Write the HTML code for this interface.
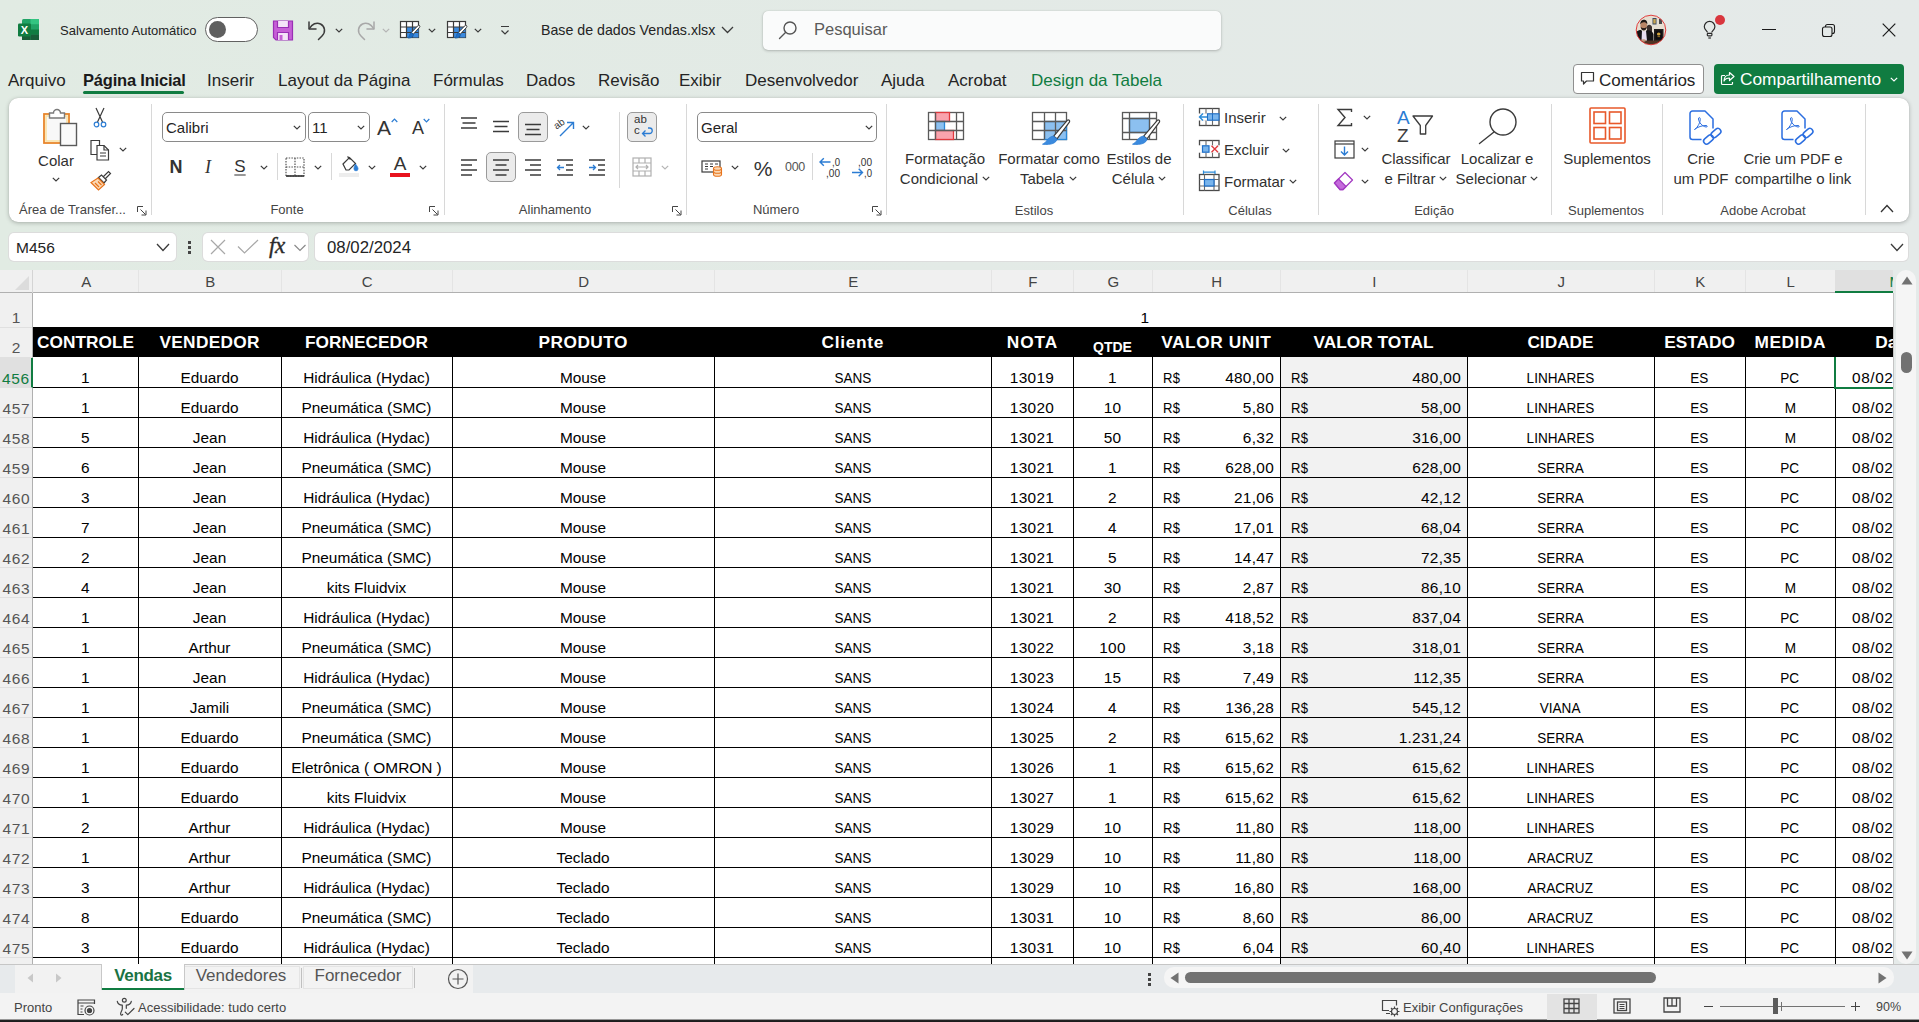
<!DOCTYPE html>
<html lang="pt-BR">
<head>
<meta charset="utf-8">
<title>Base de dados Vendas.xlsx - Excel</title>
<style>
*{box-sizing:border-box;margin:0;padding:0}
html,body{width:1919px;height:1022px;overflow:hidden}
body{position:relative;font-family:"Liberation Sans",sans-serif;color:#242424;background:linear-gradient(90deg,#e1ebe3 0%,#e3eae6 50%,#e5eae9 100%)}
.abs{position:absolute}
/* grid */
#grid{position:absolute;left:0;top:270px;width:1893px;height:694px;background:#fff;overflow:hidden}
.colhead{position:absolute;left:0;top:0;width:1893px;height:23px;background:#f0f0f0;box-shadow:inset 0 -1px 0 #b0b0b0;overflow:hidden}
.corner{position:absolute;left:0;top:0;width:33px;height:23px;border-right:1px solid #d4d4d4}
.corner:after{content:"";position:absolute;left:15px;top:6px;border-left:14px solid transparent;border-bottom:14px solid #dcdcdc}
.colhead .ch{position:absolute;top:0;height:22px;line-height:23px;text-align:center;font-size:15px;color:#444;margin-left:33px;border-right:1px solid #e4e4e4;padding-left:1.5px}
.colhead .ch.sel{background:#e0e0e0;border-bottom:2px solid #107c41;color:#107c41;height:23px;border-right:0}
.rowhead{position:absolute;left:0;top:23px;width:33px;height:671px;background:#f0f0f0;border-right:1px solid #b0b0b0}
.rh{position:absolute;left:0;width:32px;text-align:center;font-size:15.5px;line-height:41px;letter-spacing:.6px;text-indent:.6px;color:#555;border-bottom:1px solid #e0e0e0}
.rh.sel{background:#e0e0e0;color:#107c41;border-right:2px solid #107c41;width:33px}
.cells{position:absolute;left:33px;top:23px;width:1860px;height:671px;background:#fff;overflow:hidden;font-family:"Liberation Sans",sans-serif}
.gray{position:absolute;left:1247px;top:64px;width:187px;height:620px;background:#f2f2f2}
.one{position:absolute;left:1040px;top:0;width:79px;height:34px;line-height:50px;text-align:right;padding-right:3px;font-size:15.4px;color:#000}
.black{position:absolute;left:0;top:34px;width:1860px;height:30px;background:#000}
.hd{position:absolute;top:0;height:30px;line-height:31px;text-align:center;color:#fff;font-weight:bold;font-size:17.3px;white-space:nowrap}
.hd.small{font-size:14px;line-height:41px}
.vl{position:absolute;top:64px;width:1px;height:620px;background:#000}
.row{position:absolute;left:0;width:1860px;height:30px;border-bottom:1px solid #000}
.c{position:absolute;top:0;height:30px;line-height:39.5px;text-align:center;font-size:15.4px;color:#000;white-space:nowrap}
.c.money{display:flex;justify-content:space-between;padding:0 6px 0 11px}
.c.date{text-align:left;padding-left:17px;font-size:15.4px;letter-spacing:.6px}
.c.num{font-size:15.4px;letter-spacing:.3px}
.up{display:inline-block;transform:scaleX(.88)}
.rs{display:inline-block;transform:scaleX(.85);transform-origin:0 50%}
.selbox{position:absolute;left:1801px;top:64px;width:70px;height:32px;border:2px solid #107c41;border-right:0;border-top:0}

.t{position:absolute;white-space:nowrap;transform:translateY(-50%);line-height:1}
.tc{position:absolute;white-space:nowrap;transform:translate(-50%,-50%);line-height:1;text-align:center}
.ic{position:absolute;overflow:visible}
.chev{position:absolute;width:8px;height:5px}
.tab{font-size:17px;color:#242424}
.lbl{font-size:15px;color:#303030;margin-top:-1px}
.grp{font-size:13px;color:#444;margin-top:-1px}
.sep{position:absolute;top:104px;width:1px;height:111px;background:#d8d8d8}
.sep2{position:absolute;width:1px;height:27px;background:#d8d8d8}
.selbtn{position:absolute;background:#ebebeb;border:1px solid #9a9a9a;border-radius:5px}
.combo{position:absolute;height:30px;background:#fff;border:1px solid #8a8a8a;border-radius:5px;font-size:15px;line-height:29px;padding-left:3px;color:#242424}
</style>
</head>
<body>

<!-- title bar -->
<svg class="ic" style="left:17px;top:18px" width="23" height="23" viewBox="0 0 23 23">
 <rect x="5" y="1" width="17" height="21" rx="1.5" fill="#21a366"/>
 <rect x="13.5" y="1" width="8.5" height="5.5" fill="#33c481"/>
 <rect x="13.5" y="6.5" width="8.5" height="5" fill="#21a366"/>
 <rect x="5" y="6.5" width="8.5" height="5" fill="#107c41"/>
 <rect x="13.5" y="11.5" width="8.5" height="5" fill="#107c41"/>
 <rect x="5" y="11.5" width="8.5" height="10.5" fill="#185c37"/>
 <rect x="13.5" y="16.5" width="8.5" height="5.5" fill="#185c37"/>
 <rect x="1" y="5.5" width="13" height="13" rx="1.3" fill="#107c41"/>
 <text x="7.5" y="16" font-family="Liberation Sans, sans-serif" font-weight="bold" font-size="11" fill="#fff" text-anchor="middle">X</text>
</svg>
<div class="t" style="left:60px;top:30px;font-size:13px;color:#242424">Salvamento Automático</div>
<div class="abs" style="left:205px;top:17px;width:53px;height:25px;border:1px solid #616161;border-radius:13px;background:#fff"></div>
<div class="abs" style="left:209px;top:21px;width:17px;height:17px;border-radius:50%;background:#5f5f5f"></div>
<!-- save -->
<svg class="ic" style="left:272px;top:20px" width="22" height="21" viewBox="0 0 22 21" fill="none" stroke="#9a2fb5" stroke-width="1.200">
 <path d="M1.500 1h19v19h-16.500l-2.500-2.500z" fill="#c65fd6"/>
 <path d="M5.500 1v6.500h11v-6.500" fill="#f4e3f8"/>
 <path d="M5.500 20v-7.500h11v7.500" fill="#f4e3f8"/>
 <rect x="7.500" y="15" width="3" height="5" fill="#c65fd6" stroke="none"/>
</svg>
<!-- undo -->
<svg class="ic" style="left:306px;top:19px" width="22" height="22" viewBox="0 0 22 22" fill="none" stroke="#3b3b3b" stroke-width="1.5" stroke-linecap="round" stroke-linejoin="round">
 <path d="M3 3v7h7"/><path d="M3.500 9.500c2.500-4.500 7-6.500 11-4.500 4.500 2.300 5.500 8 1.500 12l-3.500 3.500"/>
</svg>
<svg class="chev" style="left:335px;top:28px" viewBox="0 0 8 5"><path d="M.8.8 4 4 7.200.8" fill="none" stroke="#3b3b3b" stroke-width="1.200"/></svg>
<!-- redo -->
<svg class="ic" style="left:355px;top:19px" width="22" height="22" viewBox="0 0 22 22" fill="none" stroke="#a8a8a8" stroke-width="1.5" stroke-linecap="round" stroke-linejoin="round">
 <path d="M19 3v7h-7"/><path d="M18.500 9.500c-2.500-4.500-7-6.500-11-4.500-4.500 2.300-5.500 8-1.500 12l3.500 3.500"/>
</svg>
<svg class="chev" style="left:382px;top:28px" viewBox="0 0 8 5"><path d="M.8.8 4 4 7.200.8" fill="none" stroke="#b5b5b5" stroke-width="1.200"/></svg>
<!-- table icons -->
<svg class="ic" style="left:399px;top:19px" width="23" height="22" viewBox="0 0 23 22" fill="none" stroke="#3b3b3b" stroke-width="1.200">
 <rect x="1.500" y="2.500" width="18" height="16" fill="#fff"/><rect x="7.500" y="8" width="12" height="10.500" fill="#3b8ade" stroke="none"/><path d="M1.500 8h18M1.500 13.500h18M7.500 2.500v16M13.500 2.500v16"/>
 <path d="M20.500 6.500c.8.800.3 1.600-.6 2.600l-5.500 6-2-1.700 6-6.200c1-1 1.500-1.300 2.100-.7z" fill="#fff" stroke="#3b3b3b" stroke-width="1"/><path d="M12.200 13.600l2.200 1.800c-.2 2.300-2.300 3.800-5.400 3.600 1.400-1 1.300-3.900 3.200-5.400z" fill="#1f6fc7" stroke="#1b5fa8" stroke-width=".8"/>
</svg>
<svg class="chev" style="left:428px;top:28px" viewBox="0 0 8 5"><path d="M.8.8 4 4 7.200.8" fill="none" stroke="#3b3b3b" stroke-width="1.200"/></svg>
<svg class="ic" style="left:446px;top:19px" width="23" height="22" viewBox="0 0 23 22" fill="none" stroke="#3b3b3b" stroke-width="1.200">
 <rect x="1.500" y="2.500" width="18" height="16" fill="#fff"/><rect x="7.500" y="8" width="12" height="10.500" fill="#3b8ade" stroke="none"/><path d="M1.500 8h18M1.500 13.500h18M7.500 2.500v16M13.500 2.500v16"/>
 <path d="M20.500 6.500c.8.800.3 1.600-.6 2.600l-5.500 6-2-1.700 6-6.200c1-1 1.500-1.300 2.100-.7z" fill="#fff" stroke="#3b3b3b" stroke-width="1"/><path d="M12.200 13.600l2.200 1.800c-.2 2.300-2.300 3.800-5.400 3.600 1.400-1 1.300-3.900 3.200-5.400z" fill="#1f6fc7" stroke="#1b5fa8" stroke-width=".8"/>
</svg>
<svg class="chev" style="left:474px;top:28px" viewBox="0 0 8 5"><path d="M.8.8 4 4 7.200.8" fill="none" stroke="#3b3b3b" stroke-width="1.200"/></svg>
<svg class="ic" style="left:500px;top:25px" width="10" height="11" viewBox="0 0 10 11" fill="none" stroke="#3b3b3b" stroke-width="1.200"><path d="M1 1.500h8M1.500 5.500 5 9l3.500-3.500"/></svg>
<div class="t" style="left:541px;top:30px;font-size:14.200px;color:#242424">Base de dados Vendas.xlsx</div>
<svg class="ic" style="left:721px;top:26px" width="13" height="8" viewBox="0 0 13 8"><path d="M1 1l5.500 5.500L12 1" fill="none" stroke="#3b3b3b" stroke-width="1.300"/></svg>
<!-- search -->
<div class="abs" style="left:763px;top:11px;width:458px;height:39px;background:#fafbfb;border-radius:5px;box-shadow:0 1px 3px rgba(0,0,0,.22),0 0 1px rgba(0,0,0,.2)"></div>
<svg class="ic" style="left:778px;top:20px" width="20" height="20" viewBox="0 0 20 20" fill="none" stroke="#555" stroke-width="1.400"><circle cx="12" cy="8" r="6"/><path d="M7.500 12.500 1.500 18.500" stroke-linecap="round"/></svg>
<div class="t" style="left:814px;top:29px;font-size:16.500px;color:#5a5a5a">Pesquisar</div>
<!-- avatar -->
<svg class="ic" style="left:1635px;top:14px" width="32" height="32" viewBox="0 0 32 32">
 <defs><clipPath id="avc"><circle cx="16" cy="16" r="14.600"/></clipPath></defs>
 <g clip-path="url(#avc)">
  <rect x="0" y="0" width="32" height="32" fill="#e6dfd2"/>
  <rect x="17.500" y="4" width="4" height="6.500" fill="#3b4a63"/><rect x="18.300" y="5" width="2.400" height="4.500" fill="#c9a64e"/>
  <rect x="24" y="5" width="3" height="5" fill="#4a4a4a"/>
  <path d="M12 12c1.500-2 4-1.500 5 1v7h-5z" fill="#3a2f2c"/>
  <ellipse cx="8.700" cy="11.500" rx="3.300" ry="4.200" fill="#b98666"/>
  <path d="M5.200 10.500c0-3.500 2-4.800 3.800-4.800s3.600 1.300 3.300 4.800c-.8-1.800-2-2.300-3.500-2.300s-2.800.7-3.600 2.300z" fill="#1d1714"/>
  <path d="M5.600 12.500c.5 3 1.800 4 3.100 4s2.800-1 3.200-4c-.8 1.200-1.800 1.500-3.200 1.500s-2.400-.3-3.100-1.500z" fill="#2a1f1b"/>
  <path d="M0 20c1-3 4-4 6-4l3 3 3-3c3 0 5.500 1.500 6.500 4v8H0z" fill="#141416"/>
  <path d="M7 16.500l2 1.500 2-1.500 1 10.500H6.500z" fill="#e6def0"/>
  <rect x="19" y="15" width="9.500" height="12" fill="#17171a"/><rect x="20" y="16" width="7.500" height="10" fill="#0d0d10" stroke="#3a3326" stroke-width=".4"/>
  <ellipse cx="23.700" cy="20" rx="1.800" ry="1.500" fill="#d1a43a"/><rect x="22.500" y="22.300" width="2.500" height=".8" fill="#b98f36"/>
  <rect x="0" y="26.500" width="32" height="6" fill="#4e3324"/>
  <ellipse cx="8.500" cy="26.500" rx="2.300" ry="1.300" fill="#c2977a"/>
 </g>
 <circle cx="16" cy="16" r="14.800" fill="none" stroke="#e02b2b" stroke-width=".9"/>
</svg>
<!-- lightbulb -->
<svg class="ic" style="left:1701px;top:18px" width="18" height="24" viewBox="0 0 18 24" fill="none" stroke="#2b2b2b" stroke-width="1.200"><path d="M6.500 14.500c-.3-1.500-3.200-3-3.200-5.800a5.300 5.300 0 0 1 10.600 0c0 2.800-2.900 4.300-3.200 5.800"/><rect x="6.300" y="15.300" width="4.600" height="2.600" rx=".8"/><path d="M7.300 20h2.600"/></svg>
<div class="abs" style="left:1715px;top:15px;width:10px;height:10px;border-radius:50%;background:#d9363e"></div>
<!-- window controls -->
<div class="abs" style="left:1762px;top:29px;width:14px;height:1px;background:#1b1b1b"></div>
<svg class="ic" style="left:1821px;top:23px" width="15" height="15" viewBox="0 0 15 15" fill="none" stroke="#1b1b1b" stroke-width="1.100"><rect x="1.500" y="4" width="9.500" height="9.500" rx="2"/><path d="M4.500 4V3.500a2 2 0 0 1 2-2h5a2 2 0 0 1 2 2v5a2 2 0 0 1-2 2H11"/></svg>
<svg class="ic" style="left:1882px;top:23px" width="14" height="14" viewBox="0 0 14 14" fill="none" stroke="#1b1b1b" stroke-width="1.200"><path d="M.7.700l12.600 12.600M13.300.700.700 13.300"/></svg>
<!-- tabs -->
<div class="t tab" style="left:8px;top:80px">Arquivo</div>
<div class="t tab" style="left:83px;top:80px;font-weight:bold;color:#1a1a1a;font-size:16.500px;letter-spacing:-0.200px">Página Inicial</div>
<div class="abs" style="left:83px;top:91px;width:101px;height:3px;background:#107c41;border-radius:1.500px"></div>
<div class="t tab" style="left:207px;top:80px">Inserir</div>
<div class="t tab" style="left:278px;top:80px">Layout da Página</div>
<div class="t tab" style="left:433px;top:80px">Fórmulas</div>
<div class="t tab" style="left:526px;top:80px">Dados</div>
<div class="t tab" style="left:598px;top:80px">Revisão</div>
<div class="t tab" style="left:679px;top:80px">Exibir</div>
<div class="t tab" style="left:745px;top:80px">Desenvolvedor</div>
<div class="t tab" style="left:881px;top:80px">Ajuda</div>
<div class="t tab" style="left:948px;top:80px">Acrobat</div>
<div class="t tab" style="left:1031px;top:80px;color:#107c41">Design da Tabela</div>
<!-- comments / share -->
<div class="abs" style="left:1573px;top:64px;width:131px;height:30px;background:#fff;border:1px solid #8f8f8f;border-radius:4px"></div>
<svg class="ic" style="left:1580px;top:71px" width="15" height="15" viewBox="0 0 15 15" fill="none" stroke="#333" stroke-width="1.200"><path d="M1.500 1.500h12v8.500h-7l-3 3v-3h-2z" stroke-linejoin="round"/></svg>
<div class="t" style="left:1599px;top:80px;font-size:17px;color:#242424">Comentários</div>
<div class="abs" style="left:1714px;top:64px;width:190px;height:30px;background:#107c41;border-radius:4px"></div>
<svg class="ic" style="left:1720px;top:71px" width="16" height="15" viewBox="0 0 16 15" fill="none" stroke="#fff" stroke-width="1.200"><path d="M5 4.500H2.500a1 1 0 0 0-1 1v7a1 1 0 0 0 1 1h9a1 1 0 0 0 1-1V11"/><path d="M9.500 1.500l4.500 4-4.500 4v-2.500c-3 0-4.500 1-5.500 3 0-3.500 2-6 5.500-6z" stroke-linejoin="round"/></svg>
<div class="t" style="left:1740px;top:80px;font-size:17.300px;color:#fff">Compartilhamento</div>
<svg class="chev" style="left:1890px;top:77px" viewBox="0 0 8 5"><path d="M.8.8 4 4 7.200.8" fill="none" stroke="#fff" stroke-width="1.200"/></svg>
<!-- ribbon card -->
<div class="abs" style="left:9px;top:98px;width:1900px;height:124px;background:#fff;border-radius:9px;box-shadow:0 1px 4px rgba(0,0,0,.25),0 0 1px rgba(0,0,0,.15)"></div>
<div class="sep" style="left:151px"></div>
<div class="sep" style="left:444px"></div>
<div class="sep" style="left:686px"></div>
<div class="sep" style="left:886px"></div>
<div class="sep" style="left:1183px"></div>
<div class="sep" style="left:1318px"></div>
<div class="sep" style="left:1551px"></div>
<div class="sep" style="left:1662px"></div>
<div class="sep" style="left:1865px"></div>
<!-- group labels -->
<div class="t grp" style="left:19px;top:210px">Área de Transfer...</div>
<div class="tc grp" style="left:287px;top:210px">Fonte</div>
<div class="tc grp" style="left:555px;top:210px">Alinhamento</div>
<div class="tc grp" style="left:776px;top:210px">Número</div>
<div class="tc grp" style="left:1034px;top:211px">Estilos</div>
<div class="tc grp" style="left:1250px;top:211px">Células</div>
<div class="tc grp" style="left:1434px;top:211px">Edição</div>
<div class="tc grp" style="left:1606px;top:211px">Suplementos</div>
<div class="tc grp" style="left:1763px;top:211px">Adobe Acrobat</div>
<!-- dialog launchers -->
<svg class="ic" style="left:137px;top:206px" width="10" height="10" viewBox="0 0 10 10" fill="none" stroke="#444" stroke-width="1"><path d="M.5 6V.500H6M3.500 3.500l5 5M9 4.500V9H4.500"/></svg>
<svg class="ic" style="left:429px;top:206px" width="10" height="10" viewBox="0 0 10 10" fill="none" stroke="#444" stroke-width="1"><path d="M.5 6V.500H6M3.500 3.500l5 5M9 4.500V9H4.500"/></svg>
<svg class="ic" style="left:672px;top:206px" width="10" height="10" viewBox="0 0 10 10" fill="none" stroke="#444" stroke-width="1"><path d="M.5 6V.500H6M3.500 3.500l5 5M9 4.500V9H4.500"/></svg>
<svg class="ic" style="left:872px;top:206px" width="10" height="10" viewBox="0 0 10 10" fill="none" stroke="#444" stroke-width="1"><path d="M.5 6V.500H6M3.500 3.500l5 5M9 4.500V9H4.500"/></svg>
<svg class="ic" style="left:1880px;top:204px" width="14" height="9" viewBox="0 0 14 9" fill="none" stroke="#333" stroke-width="1.300"><path d="M1 8l6-6.500L13 8"/></svg>

<!-- clipboard group -->
<svg class="ic" style="left:42px;top:108px" width="37" height="40" viewBox="0 0 37 40" fill="none">
 <rect x="2" y="6" width="25" height="29" fill="#f8f8f8" stroke="#e8852b" stroke-width="1.800"/>
 <rect x="4" y="8" width="21" height="25" fill="none" stroke="#fbe2a6" stroke-width="1.600"/>
 <path d="M7.500 6.500V5h4a3.500 3.500 0 0 1 7 0h4v5h-15z" fill="#fff" stroke="#7a7a7a" stroke-width="1.400"/>
 <rect x="18.500" y="15.500" width="16" height="22" fill="#fafafa" stroke="#5a5a5a" stroke-width="1.400"/>
</svg>
<div class="tc lbl" style="left:56px;top:161px">Colar</div>
<svg class="chev" style="left:52px;top:177px" viewBox="0 0 8 5"><path d="M.8.8 4 4 7.200.8" fill="none" stroke="#3b3b3b" stroke-width="1.200"/></svg>
<!-- cut -->
<svg class="ic" style="left:92px;top:107px" width="16" height="22" viewBox="0 0 16 22" fill="none" stroke-width="1.200"><path d="M4 1l6.500 14M12 1 5.500 15" stroke="#3b3b3b"/><circle cx="4.500" cy="17.500" r="2.300" stroke="#2b7cd3"/><circle cx="11.500" cy="17.500" r="2.300" stroke="#2b7cd3"/></svg>
<!-- copy -->
<svg class="ic" style="left:90px;top:139px" width="21" height="22" viewBox="0 0 21 22" fill="#fff" stroke="#3b3b3b" stroke-width="1.200"><path d="M1 1.500h8.500v14H1z"/><path d="M7 6.500h7l4.500 4.500v10H7z"/><path d="M14 6.500V11h4.500M10 14h6M10 17h6" fill="none"/></svg>
<svg class="chev" style="left:119px;top:147px" viewBox="0 0 8 5"><path d="M.8.8 4 4 7.200.8" fill="none" stroke="#3b3b3b" stroke-width="1.200"/></svg>
<!-- format painter -->
<svg class="ic" style="left:90px;top:170px" width="22" height="22" viewBox="0 0 22 22" fill="none" stroke-width="1.200"><path d="M13 7l5.500-5.500 2 2L15 9" stroke="#3b3b3b"/><path d="M8.500 7.500l3-2.500 5 5-2.500 3z" stroke="#3b3b3b" fill="#fff"/><path d="M8 8l6.500 6.500-6 5.500L1 12.500z" fill="#fbd9b5" stroke="#e8741d"/><path d="M5 13l4 4M8 11.500l3.500 3.500" stroke="#e8741d"/></svg>

<!-- font group -->
<div class="combo" style="left:162px;top:112px;width:144px">Calibri</div>
<svg class="chev" style="left:293px;top:125px" viewBox="0 0 8 5"><path d="M.8.8 4 4 7.200.8" fill="none" stroke="#3b3b3b" stroke-width="1.200"/></svg>
<div class="combo" style="left:308px;top:112px;width:62px">11</div>
<svg class="chev" style="left:357px;top:125px" viewBox="0 0 8 5"><path d="M.8.8 4 4 7.200.8" fill="none" stroke="#3b3b3b" stroke-width="1.200"/></svg>
<div class="t" style="left:377px;top:127px;font-size:21px;color:#333">A</div>
<svg class="chev" style="left:391px;top:118px;width:7px;height:5px" viewBox="0 0 8 5"><path d="M.8 4.200 4 1 7.200 4.200" fill="none" stroke="#2b7cd3" stroke-width="1.400"/></svg>
<div class="t" style="left:412px;top:128px;font-size:18px;color:#333">A</div>
<svg class="chev" style="left:423px;top:118px;width:7px;height:5px" viewBox="0 0 8 5"><path d="M.8.8 4 4 7.200.8" fill="none" stroke="#2b7cd3" stroke-width="1.400"/></svg>
<div class="tc" style="left:176px;top:167px;font-size:18px;font-weight:bold;color:#333">N</div>
<div class="tc" style="left:208px;top:167px;font-size:18px;font-style:italic;font-family:'Liberation Serif',serif;color:#333">I</div>
<div class="tc" style="left:240px;top:166px;font-size:17px;color:#333;text-decoration:underline;text-underline-offset:3px">S</div>
<svg class="chev" style="left:260px;top:165px" viewBox="0 0 8 5"><path d="M.8.8 4 4 7.200.8" fill="none" stroke="#3b3b3b" stroke-width="1.200"/></svg>
<div class="sep2" style="left:277px;top:153px"></div>
<svg class="ic" style="left:285px;top:157px" width="20" height="20" viewBox="0 0 20 20" fill="none" stroke="#555" stroke-width="1.200"><rect x="1" y="1" width="18" height="18" stroke-dasharray="1.500 1.200"/><path d="M10 1v18M1 10h18" stroke-dasharray="1.500 1.200"/><path d="M1 19h18" stroke="#333" stroke-width="1.600"/></svg>
<svg class="chev" style="left:314px;top:165px" viewBox="0 0 8 5"><path d="M.8.8 4 4 7.200.8" fill="none" stroke="#3b3b3b" stroke-width="1.200"/></svg>
<div class="sep2" style="left:331px;top:153px"></div>
<svg class="ic" style="left:339px;top:155px" width="21" height="22" viewBox="0 0 21 22" fill="none" stroke="#3b3b3b" stroke-width="1.200"><path d="M4 9l6.500-6.500 6 6L10 15H7z" fill="#fff"/><path d="M8.500 1.500l3 3"/><path d="M16.500 9c1.500 2 2.500 3.500 2.500 4.800a2 2 0 0 1-4 0c0-1.300.5-2.800 1.500-4.800z" fill="#2b7cd3" stroke="#2b7cd3" stroke-width=".8"/><rect x="0" y="18" width="20" height="4" fill="#ededed" stroke="none"/></svg>
<svg class="chev" style="left:368px;top:165px" viewBox="0 0 8 5"><path d="M.8.8 4 4 7.200.8" fill="none" stroke="#3b3b3b" stroke-width="1.200"/></svg>
<div class="tc" style="left:400px;top:163px;font-size:19px;color:#333">A</div>
<div class="abs" style="left:390px;top:173px;width:20px;height:4px;background:#e8121d"></div>
<svg class="chev" style="left:419px;top:165px" viewBox="0 0 8 5"><path d="M.8.8 4 4 7.200.8" fill="none" stroke="#3b3b3b" stroke-width="1.200"/></svg>

<!-- alignment group -->
<svg class="ic" style="left:460px;top:116px" width="18" height="20" viewBox="0 0 18 20" stroke="#3b3b3b" stroke-width="1.300"><path d="M1 2h16M2.500 7h13M1 12h16"/></svg>
<svg class="ic" style="left:492px;top:116px" width="18" height="20" viewBox="0 0 18 20" stroke="#3b3b3b" stroke-width="1.300"><path d="M1 5.500h16M2.500 10.500h13M1 15.500h16"/></svg>
<div class="selbtn" style="left:518px;top:112px;width:30px;height:30px"></div>
<svg class="ic" style="left:524px;top:116px" width="18" height="20" viewBox="0 0 18 20" stroke="#3b3b3b" stroke-width="1.300"><path d="M1 8.500h16M2.500 13.500h13M1 18.500h16"/></svg>
<svg class="ic" style="left:554px;top:116px" width="22" height="22" viewBox="0 0 22 22" fill="none"><text x="1" y="11" font-family="Liberation Sans, sans-serif" font-size="10" fill="#3b3b3b" transform="rotate(-35 6 10)">ab</text><path d="M6 20 19 7M13 6.500h6.500V13" stroke="#2b7cd3" stroke-width="1.400"/></svg>
<svg class="chev" style="left:582px;top:125px" viewBox="0 0 8 5"><path d="M.8.8 4 4 7.200.8" fill="none" stroke="#3b3b3b" stroke-width="1.200"/></svg>
<div class="sep2" style="left:619px;top:112px;height:76px"></div>
<div class="selbtn" style="left:627px;top:112px;width:30px;height:30px"></div>
<div class="abs" style="left:634px;top:114px;font-size:11.500px;line-height:11px;color:#333">ab<br>c</div>
<svg class="ic" style="left:641px;top:127px" width="12" height="11" viewBox="0 0 12 11" fill="none" stroke="#2b7cd3" stroke-width="1.300"><path d="M7 1h1.500a2.500 2.500 0 0 1 0 5.500H2M4.500 3.500 1.500 6.500l3 3"/></svg>
<svg class="ic" style="left:460px;top:158px" width="18" height="20" viewBox="0 0 18 20" stroke="#3b3b3b" stroke-width="1.300"><path d="M1 2h16M1 7h11M1 12h16M1 17h11"/></svg>
<div class="selbtn" style="left:486px;top:152px;width:30px;height:30px"></div>
<svg class="ic" style="left:492px;top:158px" width="18" height="20" viewBox="0 0 18 20" stroke="#3b3b3b" stroke-width="1.300"><path d="M1 2h16M3.500 7h11M1 12h16M3.500 17h11"/></svg>
<svg class="ic" style="left:524px;top:158px" width="18" height="20" viewBox="0 0 18 20" stroke="#3b3b3b" stroke-width="1.300"><path d="M1 2h16M6 7h11M1 12h16M6 17h11"/></svg>
<svg class="ic" style="left:556px;top:158px" width="18" height="20" viewBox="0 0 18 20" fill="none" stroke="#3b3b3b" stroke-width="1.300"><path d="M1 2h16M10 7h7M10 12h7M1 17h16"/><path d="M8 9.500H1.500M4 7 1.500 9.500 4 12" stroke="#2b7cd3"/></svg>
<svg class="ic" style="left:588px;top:158px" width="18" height="20" viewBox="0 0 18 20" fill="none" stroke="#3b3b3b" stroke-width="1.300"><path d="M1 2h16M10 7h7M10 12h7M1 17h16"/><path d="M1 9.500h6.500M5 7l2.500 2.500L5 12" stroke="#2b7cd3"/></svg>
<svg class="ic" style="left:632px;top:157px" width="20" height="20" viewBox="0 0 20 20" fill="none" stroke="#b0b0b0" stroke-width="1.200"><rect x="1" y="1" width="18" height="18"/><path d="M1 6h18M1 14h18M7 1v5M13 1v5M7 14v5M13 14v5M4 10h12M6 8l-2 2 2 2M14 8l2 2-2 2"/></svg>
<svg class="chev" style="left:661px;top:165px" viewBox="0 0 8 5"><path d="M.8.8 4 4 7.200.8" fill="none" stroke="#b5b5b5" stroke-width="1.200"/></svg>

<!-- number group -->
<div class="combo" style="left:697px;top:112px;width:180px">Geral</div>
<svg class="chev" style="left:865px;top:125px" viewBox="0 0 8 5"><path d="M.8.8 4 4 7.200.8" fill="none" stroke="#3b3b3b" stroke-width="1.200"/></svg>
<svg class="ic" style="left:701px;top:158px" width="22" height="20" viewBox="0 0 22 20" fill="none"><rect x="1" y="3" width="18" height="11" stroke="#3b3b3b" stroke-width="1.200" fill="#fff"/><path d="M4 6h3M4 8.500h3M4 11h3M9 6h3M9 8.500h3M14 6h3" stroke="#3b3b3b" stroke-width="1"/><path d="M12.500 10.500v6c0 1 1.800 1.800 4 1.800s4-.8 4-1.800v-6" fill="#fbd9b5" stroke="#e8741d" stroke-width="1.100"/><ellipse cx="16.500" cy="10.500" rx="4" ry="1.800" fill="#fbd9b5" stroke="#e8741d" stroke-width="1.100"/><path d="M12.500 13.500c0 1 1.800 1.800 4 1.800s4-.8 4-1.800" stroke="#e8741d" stroke-width="1.100"/></svg>
<svg class="chev" style="left:731px;top:165px" viewBox="0 0 8 5"><path d="M.8.8 4 4 7.200.8" fill="none" stroke="#3b3b3b" stroke-width="1.200"/></svg>
<div class="tc" style="left:763px;top:168px;font-size:21px;color:#333">%</div>
<div class="tc" style="left:795px;top:167px;font-size:12.500px;color:#555;letter-spacing:-0.300px">000</div>
<div class="sep2" style="left:812px;top:153px"></div>
<svg class="ic" style="left:819px;top:155px" width="22" height="24" viewBox="0 0 22 24" fill="none"><path d="M1 7h10.500M4.800 3.200 1 7l3.800 3.800" stroke="#2b7cd3" stroke-width="1.400"/><text x="21" y="10.500" text-anchor="end" font-family="Liberation Sans, sans-serif" font-size="11.500" fill="#333" textLength="8" lengthAdjust="spacingAndGlyphs">,0</text><text x="21" y="21.500" text-anchor="end" font-family="Liberation Sans, sans-serif" font-size="11.500" fill="#333" textLength="14" lengthAdjust="spacingAndGlyphs">,00</text></svg>
<svg class="ic" style="left:851px;top:155px" width="22" height="24" viewBox="0 0 22 24" fill="none"><path d="M1 17.500h10.500M7.700 13.700l3.800 3.800-3.800 3.800" stroke="#2b7cd3" stroke-width="1.400"/><text x="21" y="10.500" text-anchor="end" font-family="Liberation Sans, sans-serif" font-size="11.500" fill="#333" textLength="14" lengthAdjust="spacingAndGlyphs">,00</text><text x="21" y="21.500" text-anchor="end" font-family="Liberation Sans, sans-serif" font-size="11.500" fill="#333" textLength="8" lengthAdjust="spacingAndGlyphs">,0</text></svg>

<!-- styles group -->
<svg class="ic" style="left:927px;top:111px" width="38" height="30" viewBox="0 0 38 30" fill="none" stroke="#5a5a5a" stroke-width="1.300"><rect x="1.500" y="1.500" width="35" height="27" fill="#fff"/><rect x="8.500" y="1.500" width="14" height="9" fill="#f9a3ad" stroke="#e03a3e"/><rect x="8.500" y="10.500" width="9" height="9" fill="#8cc0f0" stroke="#2b88d8"/><rect x="8.500" y="19.500" width="18" height="9" fill="#f9a3ad" stroke="#e03a3e"/><path d="M8.500 1.500v27M29.500 1.500v27M1.500 10.500h35M1.500 19.500h35"/></svg>
<div class="tc lbl" style="left:945px;top:159px">Formatação</div>
<div class="tc lbl" style="left:939px;top:179px">Condicional</div>
<svg class="chev" style="left:982px;top:176px" viewBox="0 0 8 5"><path d="M.8.8 4 4 7.200.8" fill="none" stroke="#3b3b3b" stroke-width="1.200"/></svg>
<svg class="ic" style="left:1031px;top:111px" width="40" height="34" viewBox="0 0 40 34" fill="none" stroke="#5a5a5a" stroke-width="1.300"><rect x="1.500" y="1.500" width="34" height="27" fill="#fff"/><rect x="13.500" y="10.500" width="22" height="18" fill="#8cc0f0" stroke="#2b88d8"/><path d="M13.500 1.500v27M24.500 1.500v27M1.500 10.500h34M1.500 19.500h34"/><path d="M36.300 9.300c1.400-1 3 .4 2.100 1.900L26 27.800l-3.300-2.600z" fill="#fff" stroke="#3b3b3b" stroke-width="1.200" stroke-linejoin="round"/><path d="M22.300 25l3.800 3c-.8 3.800-5.500 6.300-14.600 5.200 4.300-1.300 4.300-6.700 10.800-8.200z" fill="#3b8ade" stroke="#2b7cd3" stroke-width=".8"/></svg>
<div class="tc lbl" style="left:1049px;top:159px">Formatar como</div>
<div class="tc lbl" style="left:1042px;top:179px">Tabela</div>
<svg class="chev" style="left:1069px;top:176px" viewBox="0 0 8 5"><path d="M.8.8 4 4 7.200.8" fill="none" stroke="#3b3b3b" stroke-width="1.200"/></svg>
<svg class="ic" style="left:1121px;top:111px" width="40" height="34" viewBox="0 0 40 34" fill="none" stroke="#5a5a5a" stroke-width="1.300"><rect x="1.500" y="1.500" width="34" height="27" fill="#fff"/><rect x="8.500" y="7.500" width="20" height="14" fill="#8cc0f0" stroke="#2b88d8"/><path d="M8.500 1.500v27M28.500 1.500v27M1.500 7.500h34M1.500 21.500h34"/><path d="M36.300 9.300c1.400-1 3 .4 2.100 1.900L26 27.800l-3.300-2.600z" fill="#fff" stroke="#3b3b3b" stroke-width="1.200" stroke-linejoin="round"/><path d="M22.300 25l3.800 3c-.8 3.800-5.500 6.300-14.600 5.200 4.300-1.300 4.300-6.700 10.800-8.200z" fill="#3b8ade" stroke="#2b7cd3" stroke-width=".8"/></svg>
<div class="tc lbl" style="left:1139px;top:159px">Estilos de</div>
<div class="tc lbl" style="left:1133px;top:179px">Célula</div>
<svg class="chev" style="left:1158px;top:176px" viewBox="0 0 8 5"><path d="M.8.8 4 4 7.200.8" fill="none" stroke="#3b3b3b" stroke-width="1.200"/></svg>

<!-- cells group -->
<svg class="ic" style="left:1198px;top:107px" width="22" height="20" viewBox="0 0 22 20" fill="none" stroke="#4a4a4a" stroke-width="1.300"><rect x="1.500" y="1.500" width="19.500" height="17" fill="#fff"/><path d="M8 1.500v17M14.500 1.500v17M1.500 7.200h19.500M1.500 12.800h19.500" stroke="#6a6a6a" stroke-width="1.100"/><rect x="0" y="6.500" width="9" height="7" fill="#fff" stroke="none"/><rect x="9.500" y="6.800" width="11.500" height="6.400" fill="#7ab5ec" stroke="#1f6fc7" stroke-width="1.100"/><path d="M14.500 7v6" stroke="#1f6fc7" stroke-width="1"/><path d="M9 10H1.500M5 6.500 1.500 10 5 13.500" stroke="#2b8ad8" stroke-width="1.400"/></svg>
<div class="t lbl" style="left:1224px;top:118px">Inserir</div>
<svg class="chev" style="left:1279px;top:116px" viewBox="0 0 8 5"><path d="M.8.8 4 4 7.200.8" fill="none" stroke="#3b3b3b" stroke-width="1.200"/></svg>
<svg class="ic" style="left:1198px;top:139px" width="22" height="20" viewBox="0 0 22 20" fill="none" stroke="#4a4a4a" stroke-width="1.300"><rect x="1.500" y="1.500" width="19.500" height="17" fill="#fff"/><path d="M8 1.500v17M14.500 1.500v17M1.500 7.200h19.500M1.500 12.800h19.500" stroke="#6a6a6a" stroke-width="1.100"/><rect x="0" y="6.300" width="22" height="7.400" fill="#fff" stroke="none"/><rect x="4.500" y="6.800" width="6.500" height="6.400" fill="#7ab5ec" stroke="#1f6fc7" stroke-width="1.200"/><path d="M13.500 6.800l6.500 6.400M20 6.800l-6.500 6.400" stroke="#e03a3e" stroke-width="1.400"/></svg>
<div class="t lbl" style="left:1224px;top:150px">Excluir</div>
<svg class="chev" style="left:1282px;top:148px" viewBox="0 0 8 5"><path d="M.8.8 4 4 7.200.8" fill="none" stroke="#3b3b3b" stroke-width="1.200"/></svg>
<svg class="ic" style="left:1198px;top:170px" width="22" height="22" viewBox="0 0 22 22" fill="none" stroke="#4a4a4a" stroke-width="1.300"><rect x="1.500" y="4.500" width="19.500" height="16" fill="#fff"/><path d="M6.500 4.500v16M16 4.500v16M1.500 9.500h19.500M1.500 16h19.500" stroke="#6a6a6a" stroke-width="1.100"/><rect x="6.500" y="9.500" width="9.500" height="6.500" fill="#7ab5ec" stroke="#1f6fc7" stroke-width="1.200"/><path d="M5.500 2.200h11.500M5.500 .500v3.400M17 .500v3.400" stroke="#2b8ad8" stroke-width="1.200"/></svg>
<div class="t lbl" style="left:1224px;top:182px">Formatar</div>
<svg class="chev" style="left:1289px;top:179px" viewBox="0 0 8 5"><path d="M.8.8 4 4 7.200.8" fill="none" stroke="#3b3b3b" stroke-width="1.200"/></svg>

<!-- editing group -->
<svg class="ic" style="left:1336px;top:108px" width="17" height="19" viewBox="0 0 17 19" fill="none" stroke="#3b3b3b" stroke-width="1.400"><path d="M15.500 4V1.500H2l7 8-7 8h13.500V15"/></svg>
<svg class="chev" style="left:1363px;top:115px" viewBox="0 0 8 5"><path d="M.8.8 4 4 7.200.8" fill="none" stroke="#3b3b3b" stroke-width="1.200"/></svg>
<svg class="ic" style="left:1334px;top:140px" width="21" height="19" viewBox="0 0 21 19" fill="none" stroke="#3b3b3b" stroke-width="1.200"><rect x="1" y="1" width="19" height="17" fill="#fff"/><path d="M1 4h19"/><path d="M10.500 6.500v8.500M7 11.500l3.500 3.500 3.500-3.500" stroke="#2b7cd3" stroke-width="1.400"/></svg>
<svg class="chev" style="left:1361px;top:147px" viewBox="0 0 8 5"><path d="M.8.8 4 4 7.200.8" fill="none" stroke="#3b3b3b" stroke-width="1.200"/></svg>
<svg class="ic" style="left:1333px;top:171px" width="22" height="20" viewBox="0 0 22 20" fill="none" stroke="#a33bc2" stroke-width="1.300"><path d="M1.500 12 12 1.500l7.500 7.500L10 18.500H7z" fill="#fff" stroke-linejoin="round"/><path d="M1.500 12 5.500 8 13 15.500l-3 3H7z" fill="#c56bdc"/></svg>
<svg class="chev" style="left:1361px;top:179px" viewBox="0 0 8 5"><path d="M.8.8 4 4 7.200.8" fill="none" stroke="#3b3b3b" stroke-width="1.200"/></svg>
<svg class="ic" style="left:1396px;top:108px" width="40" height="36" viewBox="0 0 40 36" fill="none"><text x="1" y="16" font-family="Liberation Sans, sans-serif" font-size="19" fill="#2b7cd3">A</text><text x="1" y="34" font-family="Liberation Sans, sans-serif" font-size="19" fill="#3b3b3b">Z</text><path d="M17 8h19.500l-6.800 9.500v8.500h-5.400v-8.500z" stroke="#3b3b3b" stroke-width="1.300" stroke-linejoin="round"/></svg>
<div class="tc lbl" style="left:1416px;top:159px">Classificar</div>
<div class="tc lbl" style="left:1410px;top:179px">e Filtrar</div>
<svg class="chev" style="left:1439px;top:176px" viewBox="0 0 8 5"><path d="M.8.8 4 4 7.200.8" fill="none" stroke="#3b3b3b" stroke-width="1.200"/></svg>
<svg class="ic" style="left:1477px;top:107px" width="42" height="38" viewBox="0 0 42 38" fill="none" stroke="#3b3b3b" stroke-width="1.400"><circle cx="26" cy="15" r="13"/><path d="M17 25 2.500 36.500" stroke-linecap="round"/></svg>
<div class="tc lbl" style="left:1497px;top:159px">Localizar e</div>
<div class="tc lbl" style="left:1491px;top:179px">Selecionar</div>
<svg class="chev" style="left:1530px;top:176px" viewBox="0 0 8 5"><path d="M.8.8 4 4 7.200.8" fill="none" stroke="#3b3b3b" stroke-width="1.200"/></svg>

<!-- add-ins -->
<svg class="ic" style="left:1589px;top:107px" width="37" height="37" viewBox="0 0 37 37" fill="#fff" stroke="#e8592b" stroke-width="1.600"><rect x="1" y="1" width="35" height="35" rx="1"/><rect x="5" y="5" width="11.500" height="11.500"/><rect x="20.500" y="5" width="11.500" height="11.500"/><rect x="5" y="20.500" width="11.500" height="11.500"/><rect x="20.500" y="20.500" width="11.500" height="11.500"/></svg>
<div class="tc lbl" style="left:1607px;top:159px">Suplementos</div>

<!-- acrobat -->
<svg class="ic" style="left:1688px;top:110px" width="36" height="38" viewBox="0 0 36 38" fill="none" stroke="#2b6ee0" stroke-width="1.500"><path d="M13.500 29.500H4.500A2.500 2.500 0 0 1 2 27V3.500A2.500 2.500 0 0 1 4.500 1H17l8 8v9.500" stroke-linejoin="round"/><path d="M6.500 19.500c3.500-2.200 6.200-8 5.700-11-.3-1.500-1.800-1.200-1.700.5.300 3.500 4 7.500 7.500 8 1.700.2 1.700-1.400 0-1.500-3.500-.2-8.500 1.500-11.500 4z" stroke-width="1"/><rect x="15" y="26.500" width="11" height="6" rx="3" transform="rotate(-41 20.500 29.500)"/><rect x="22.500" y="20" width="11" height="6" rx="3" transform="rotate(-41 28 23)"/></svg>
<div class="tc lbl" style="left:1701px;top:159px">Crie</div>
<div class="tc lbl" style="left:1701px;top:179px">um PDF</div>
<svg class="ic" style="left:1780px;top:110px" width="36" height="38" viewBox="0 0 36 38" fill="none" stroke="#2b6ee0" stroke-width="1.500"><path d="M13.500 29.500H4.500A2.500 2.500 0 0 1 2 27V3.500A2.500 2.500 0 0 1 4.500 1H17l8 8v9.500" stroke-linejoin="round"/><path d="M6.500 19.500c3.500-2.200 6.200-8 5.700-11-.3-1.500-1.800-1.200-1.700.5.300 3.500 4 7.500 7.500 8 1.700.2 1.700-1.400 0-1.500-3.500-.2-8.500 1.500-11.500 4z" stroke-width="1"/><rect x="15" y="26.500" width="11" height="6" rx="3" transform="rotate(-41 20.500 29.500)"/><rect x="22.500" y="20" width="11" height="6" rx="3" transform="rotate(-41 28 23)"/></svg>
<div class="tc lbl" style="left:1793px;top:159px">Crie um PDF e</div>
<div class="tc lbl" style="left:1793px;top:179px">compartilhe o link</div>
<!-- formula bar -->
<div class="abs" style="left:9px;top:233px;width:167px;height:28px;background:#fff;border-radius:5px;box-shadow:0 0 0 1px #dcdcdc"></div>
<div class="t" style="left:16px;top:248px;font-size:15.500px;color:#242424">M456</div>
<svg class="ic" style="left:156px;top:243px" width="14" height="9" viewBox="0 0 14 9" fill="none" stroke="#3b3b3b" stroke-width="1.300"><path d="M1 1l6 6.500L13 1"/></svg>
<div class="abs" style="left:188px;top:241px;width:3px;height:3px;background:#444;box-shadow:0 5px 0 #444,0 10px 0 #444"></div>
<div class="abs" style="left:203px;top:233px;width:105px;height:28px;background:#fff;border-radius:5px;box-shadow:0 0 0 1px #dcdcdc"></div>
<svg class="ic" style="left:210px;top:239px" width="16" height="16" viewBox="0 0 16 16" fill="none" stroke="#a8a8a8" stroke-width="1.200"><path d="M1 1l14 14M15 1 1 15"/></svg>
<svg class="ic" style="left:237px;top:239px" width="22" height="15" viewBox="0 0 22 15" fill="none" stroke="#a8a8a8" stroke-width="1.200"><path d="M1 7.500l6.500 6.500L21 1"/></svg>
<div class="t" style="left:269px;top:245px;font-size:23px;font-style:italic;font-family:'Liberation Serif',serif;color:#2b2b2b;letter-spacing:-0.300px;-webkit-text-stroke:.35px #2b2b2b">fx</div>
<svg class="ic" style="left:294px;top:244px" width="12" height="8" viewBox="0 0 12 8" fill="none" stroke="#8a8a8a" stroke-width="1.200"><path d="M.5 1 6 6.500 11.500 1"/></svg>
<div class="abs" style="left:315px;top:233px;width:1593px;height:28px;background:#fff;border-radius:5px;box-shadow:0 0 0 1px #dcdcdc"></div>
<div class="t" style="left:327px;top:248px;font-size:16.800px;color:#242424">08/02/2024</div>
<svg class="ic" style="left:1890px;top:243px" width="14" height="9" viewBox="0 0 14 9" fill="none" stroke="#3b3b3b" stroke-width="1.300"><path d="M1 1l6 6.500L13 1"/></svg>

<!-- vertical scrollbar -->
<div class="abs" style="left:1893px;top:270px;width:26px;height:694px;background:#e5eae9"></div><div class="abs" style="left:1893px;top:293px;width:1px;height:671px;background:#c4c4c4"></div>
<div class="abs" style="left:1896px;top:270px;width:20px;height:694px;background:#f5f5f5;border-radius:10px"></div>
<svg class="ic" style="left:1901px;top:276px" width="12" height="9" viewBox="0 0 12 9"><path d="M6 .500 11.500 8.500H.500z" fill="#727272"/></svg>
<svg class="ic" style="left:1901px;top:951px" width="12" height="9" viewBox="0 0 12 9"><path d="M6 8.500 11.500.500H.500z" fill="#727272"/></svg>
<div class="abs" style="left:1901px;top:352px;width:11px;height:21px;background:#727272;border-radius:5.500px"></div>

<!-- sheet tabs bar -->
<div class="abs" style="left:0;top:964px;width:1919px;height:29px;background:#e7eaec;border-top:1px solid #c6c6c6"></div>
<div class="abs" style="left:15px;top:965px;width:458px;height:28px;background:#f2f2f2"></div>
<svg class="ic" style="left:27px;top:973px" width="7" height="10" viewBox="0 0 7 10"><path d="M6 .500v9L.500 5z" fill="#c8c8c8"/></svg>
<svg class="ic" style="left:55px;top:973px" width="7" height="10" viewBox="0 0 7 10"><path d="M1 .500v9L6.500 5z" fill="#c8c8c8"/></svg>
<div class="abs" style="left:185px;top:966px;width:115px;height:23px;background:#f3f3f3;border:1px solid #e4e4e4;border-left:0"></div><div class="abs" style="left:303px;top:966px;width:110px;height:23px;background:#f3f3f3;border:1px solid #e4e4e4"></div><div class="abs" style="left:102px;top:964px;width:82px;height:26px;background:#fff;border-bottom:2px solid #107c41;box-shadow:-1px 0 0 #c8c8c8,1px 0 0 #c8c8c8"></div>
<div class="tc" style="left:143px;top:975px;font-size:17px;font-weight:bold;color:#1a7343;letter-spacing:-0.300px">Vendas</div>
<div class="tc" style="left:241px;top:975px;font-size:17px;color:#555">Vendedores</div>
<div class="abs" style="left:301px;top:968px;width:1px;height:20px;background:#c0c0c0"></div>
<div class="tc" style="left:358px;top:975px;font-size:17px;color:#555">Fornecedor</div>
<div class="abs" style="left:414px;top:968px;width:1px;height:20px;background:#c0c0c0"></div>
<svg class="ic" style="left:447px;top:968px" width="22" height="22" viewBox="0 0 22 22" fill="none" stroke="#555" stroke-width="1.200"><circle cx="11" cy="11" r="9.500"/><path d="M11 5.500v11M5.500 11h11"/></svg>
<div class="abs" style="left:1148px;top:973px;width:3px;height:3px;background:#444;box-shadow:0 5px 0 #444,0 10px 0 #444"></div>
<div class="abs" style="left:1164px;top:967px;width:730px;height:21px;background:#f5f5f5;border-radius:10px"></div>
<svg class="ic" style="left:1170px;top:972px" width="9" height="12" viewBox="0 0 9 12"><path d="M.5 6 8.500.500v11z" fill="#727272"/></svg>
<svg class="ic" style="left:1878px;top:972px" width="9" height="12" viewBox="0 0 9 12"><path d="M8.500 6 .500.500v11z" fill="#727272"/></svg>
<div class="abs" style="left:1185px;top:972px;width:471px;height:11px;background:#727272;border-radius:5.500px"></div>

<!-- status bar -->
<div class="abs" style="left:0;top:993px;width:1919px;height:29px;background:#f3f3f3"></div>
<div class="abs" style="left:0;top:1019px;width:1919px;height:3px;background:linear-gradient(#d0d0d0 0,#6a6a6a 30%,#222 45%,#1a1a1a)"></div>
<div class="t" style="left:14px;top:1007px;font-size:13px;color:#444">Pronto</div>
<svg class="ic" style="left:77px;top:999px" width="19" height="17" viewBox="0 0 19 17" fill="none" stroke="#444" stroke-width="1.200"><path d="M7 15.500H1V1h16.500v4M1 4h16.500M3.500 7h3M3.500 10h2M3.500 13h2"/><circle cx="12.500" cy="11.500" r="4.500"/><circle cx="12.500" cy="11.500" r="2" fill="#444"/></svg>
<svg class="ic" style="left:116px;top:997px" width="20" height="20" viewBox="0 0 20 20" fill="none" stroke="#444" stroke-width="1.200" stroke-linecap="round" stroke-linejoin="round"><circle cx="8.300" cy="3.200" r="1.900"/><path d="M1.300 4.300c.3 2 2.400 3.600 5 3.800v3.400c0 2.500-2 3.800-1.700 5.700.2 1 1.500 1.200 2.100.2"/><path d="M15.300 4.300c-.3 2-2.400 3.600-5 3.800v3.200"/><path d="M9.300 15.200l2.500 2.500 6.200-6.200"/></svg>
<div class="t" style="left:138px;top:1007px;font-size:13px;color:#444">Acessibilidade: tudo certo</div>
<svg class="ic" style="left:1381px;top:998px" width="20" height="20" viewBox="0 0 20 20" fill="none" stroke="#444" stroke-width="1.200"><path d="M8 12.500H1.500v-10h14v5M5 15.500h4"/><circle cx="13.500" cy="13.500" r="3"/><path d="M13.500 8.500v2M13.500 16.500v2M8.500 13.500h2M16.500 13.500h2M10 10l1.400 1.400M15.600 15.600 17 17M17 10l-1.400 1.400M11.400 15.600 10 17"/></svg>
<div class="t" style="left:1403px;top:1007px;font-size:13px;color:#444">Exibir Configurações</div>
<div class="abs" style="left:1547px;top:994px;width:50px;height:26px;background:#e3e3e3"></div>
<svg class="ic" style="left:1563px;top:998px" width="17" height="16" viewBox="0 0 17 16" fill="none" stroke="#444" stroke-width="1.300"><rect x="1" y="1" width="15" height="14"/><path d="M1 5.500h15M1 10.500h15M6 1v14M11 1v14"/></svg>
<svg class="ic" style="left:1613px;top:998px" width="18" height="16" viewBox="0 0 18 16" fill="none" stroke="#444" stroke-width="1.300"><rect x="1" y="1" width="16" height="14"/><rect x="4.500" y="4" width="9" height="8.500"/><path d="M6.500 6.500h5M6.500 8.500h5M6.500 10.500h5" stroke-width="1"/></svg>
<svg class="ic" style="left:1663px;top:997px" width="18" height="16" viewBox="0 0 18 16" fill="none" stroke="#444" stroke-width="1.300"><path d="M1 1h16v14H1zM9 1v8M4.500 1v8h9V1" /></svg>
<div class="abs" style="left:1704px;top:1006px;width:9px;height:1px;background:#444"></div>
<div class="abs" style="left:1720px;top:1006px;width:125px;height:1px;background:#727272"></div>
<div class="abs" style="left:1781px;top:1002px;width:1px;height:9px;background:#727272"></div>
<div class="abs" style="left:1773px;top:998px;width:5px;height:16px;background:#5c5c5c"></div>
<div class="abs" style="left:1851px;top:1006px;width:9px;height:1px;background:#444"></div>
<div class="abs" style="left:1855px;top:1002px;width:1px;height:9px;background:#444"></div>
<div class="t" style="left:1876px;top:1007px;font-size:12.500px;color:#444">90%</div>

<div id="grid">
<div class="colhead">
<div class="corner"></div>
<div class="ch" style="left:0px;width:106px">A</div>
<div class="ch" style="left:105px;width:144px">B</div>
<div class="ch" style="left:248px;width:172px">C</div>
<div class="ch" style="left:419px;width:263px">D</div>
<div class="ch" style="left:681px;width:278px">E</div>
<div class="ch" style="left:958px;width:83px">F</div>
<div class="ch" style="left:1040px;width:80px">G</div>
<div class="ch" style="left:1119px;width:129px">H</div>
<div class="ch" style="left:1247px;width:188px">I</div>
<div class="ch" style="left:1434px;width:188px">J</div>
<div class="ch" style="left:1621px;width:92px">K</div>
<div class="ch" style="left:1712px;width:91px">L</div>
<div class="ch sel" style="left:1802px;width:120px">M</div>
</div>
<div class="rowhead">
<div class="rh" style="top:0;height:35px;line-height:49px">1</div>
<div class="rh" style="top:35px;height:30px;line-height:39px">2</div>
<div class="rh sel" style="top:65px;height:30px">456</div>
<div class="rh" style="top:95px;height:30px">457</div>
<div class="rh" style="top:125px;height:30px">458</div>
<div class="rh" style="top:155px;height:30px">459</div>
<div class="rh" style="top:185px;height:30px">460</div>
<div class="rh" style="top:215px;height:30px">461</div>
<div class="rh" style="top:245px;height:30px">462</div>
<div class="rh" style="top:275px;height:30px">463</div>
<div class="rh" style="top:305px;height:30px">464</div>
<div class="rh" style="top:335px;height:30px">465</div>
<div class="rh" style="top:365px;height:30px">466</div>
<div class="rh" style="top:395px;height:30px">467</div>
<div class="rh" style="top:425px;height:30px">468</div>
<div class="rh" style="top:455px;height:30px">469</div>
<div class="rh" style="top:485px;height:30px">470</div>
<div class="rh" style="top:515px;height:30px">471</div>
<div class="rh" style="top:545px;height:30px">472</div>
<div class="rh" style="top:575px;height:30px">473</div>
<div class="rh" style="top:605px;height:30px">474</div>
<div class="rh" style="top:635px;height:30px">475</div>
</div>
<div class="cells">
<div class="gray"></div>
<div class="one">1</div>
<div class="black">
<div class="hd" style="left:0px;width:105px">CONTROLE</div>
<div class="hd" style="left:105px;width:143px;letter-spacing:0.3px;text-indent:0.3px">VENDEDOR</div>
<div class="hd" style="left:248px;width:171px">FORNECEDOR</div>
<div class="hd" style="left:419px;width:262px;letter-spacing:0.5px;text-indent:0.5px">PRODUTO</div>
<div class="hd" style="left:681px;width:277px;letter-spacing:0.7px;text-indent:0.7px">Cliente</div>
<div class="hd" style="left:958px;width:82px;letter-spacing:0.9px;text-indent:0.9px">NOTA</div>
<div class="hd small" style="left:1040px;width:79px">QTDE</div>
<div class="hd" style="left:1119px;width:128px;letter-spacing:0.6px;text-indent:0.6px">VALOR UNIT</div>
<div class="hd" style="left:1247px;width:187px">VALOR TOTAL</div>
<div class="hd" style="left:1434px;width:187px">CIDADE</div>
<div class="hd" style="left:1621px;width:91px">ESTADO</div>
<div class="hd" style="left:1712px;width:90px;letter-spacing:0.55px;text-indent:0.55px">MEDIDA</div>
<div class="hd" style="left:1802px;width:118px">Data</div>
</div>
<div class="vl" style="left:105px"></div>
<div class="vl" style="left:248px"></div>
<div class="vl" style="left:419px"></div>
<div class="vl" style="left:681px"></div>
<div class="vl" style="left:958px"></div>
<div class="vl" style="left:1040px"></div>
<div class="vl" style="left:1119px"></div>
<div class="vl" style="left:1247px"></div>
<div class="vl" style="left:1434px"></div>
<div class="vl" style="left:1621px"></div>
<div class="vl" style="left:1712px"></div>
<div class="vl" style="left:1802px"></div>
<div class="row" style="top:65px">
<div class="c num" style="left:0px;width:105px">1</div>
<div class="c" style="left:105px;width:143px">Eduardo</div>
<div class="c" style="left:248px;width:171px">Hidráulica (Hydac)</div>
<div class="c" style="left:419px;width:262px">Mouse</div>
<div class="c" style="left:681px;width:277px"><span class="up">SANS</span></div>
<div class="c num" style="left:958px;width:82px">13019</div>
<div class="c num" style="left:1040px;width:79px">1</div>
<div class="c money num" style="left:1119px;width:128px"><span class="rs">R$</span><span>480,00</span></div>
<div class="c money num" style="left:1247px;width:187px"><span class="rs">R$</span><span>480,00</span></div>
<div class="c" style="left:1434px;width:187px"><span class="up">LINHARES</span></div>
<div class="c" style="left:1621px;width:91px"><span class="up">ES</span></div>
<div class="c" style="left:1712px;width:90px"><span class="up">PC</span></div>
<div class="c date" style="left:1802px;width:120px">08/02/2024</div>
</div>
<div class="row" style="top:95px">
<div class="c num" style="left:0px;width:105px">1</div>
<div class="c" style="left:105px;width:143px">Eduardo</div>
<div class="c" style="left:248px;width:171px">Pneumática (SMC)</div>
<div class="c" style="left:419px;width:262px">Mouse</div>
<div class="c" style="left:681px;width:277px"><span class="up">SANS</span></div>
<div class="c num" style="left:958px;width:82px">13020</div>
<div class="c num" style="left:1040px;width:79px">10</div>
<div class="c money num" style="left:1119px;width:128px"><span class="rs">R$</span><span>5,80</span></div>
<div class="c money num" style="left:1247px;width:187px"><span class="rs">R$</span><span>58,00</span></div>
<div class="c" style="left:1434px;width:187px"><span class="up">LINHARES</span></div>
<div class="c" style="left:1621px;width:91px"><span class="up">ES</span></div>
<div class="c" style="left:1712px;width:90px"><span class="up">M</span></div>
<div class="c date" style="left:1802px;width:120px">08/02/2024</div>
</div>
<div class="row" style="top:125px">
<div class="c num" style="left:0px;width:105px">5</div>
<div class="c" style="left:105px;width:143px">Jean</div>
<div class="c" style="left:248px;width:171px">Hidráulica (Hydac)</div>
<div class="c" style="left:419px;width:262px">Mouse</div>
<div class="c" style="left:681px;width:277px"><span class="up">SANS</span></div>
<div class="c num" style="left:958px;width:82px">13021</div>
<div class="c num" style="left:1040px;width:79px">50</div>
<div class="c money num" style="left:1119px;width:128px"><span class="rs">R$</span><span>6,32</span></div>
<div class="c money num" style="left:1247px;width:187px"><span class="rs">R$</span><span>316,00</span></div>
<div class="c" style="left:1434px;width:187px"><span class="up">LINHARES</span></div>
<div class="c" style="left:1621px;width:91px"><span class="up">ES</span></div>
<div class="c" style="left:1712px;width:90px"><span class="up">M</span></div>
<div class="c date" style="left:1802px;width:120px">08/02/2024</div>
</div>
<div class="row" style="top:155px">
<div class="c num" style="left:0px;width:105px">6</div>
<div class="c" style="left:105px;width:143px">Jean</div>
<div class="c" style="left:248px;width:171px">Pneumática (SMC)</div>
<div class="c" style="left:419px;width:262px">Mouse</div>
<div class="c" style="left:681px;width:277px"><span class="up">SANS</span></div>
<div class="c num" style="left:958px;width:82px">13021</div>
<div class="c num" style="left:1040px;width:79px">1</div>
<div class="c money num" style="left:1119px;width:128px"><span class="rs">R$</span><span>628,00</span></div>
<div class="c money num" style="left:1247px;width:187px"><span class="rs">R$</span><span>628,00</span></div>
<div class="c" style="left:1434px;width:187px"><span class="up">SERRA</span></div>
<div class="c" style="left:1621px;width:91px"><span class="up">ES</span></div>
<div class="c" style="left:1712px;width:90px"><span class="up">PC</span></div>
<div class="c date" style="left:1802px;width:120px">08/02/2024</div>
</div>
<div class="row" style="top:185px">
<div class="c num" style="left:0px;width:105px">3</div>
<div class="c" style="left:105px;width:143px">Jean</div>
<div class="c" style="left:248px;width:171px">Hidráulica (Hydac)</div>
<div class="c" style="left:419px;width:262px">Mouse</div>
<div class="c" style="left:681px;width:277px"><span class="up">SANS</span></div>
<div class="c num" style="left:958px;width:82px">13021</div>
<div class="c num" style="left:1040px;width:79px">2</div>
<div class="c money num" style="left:1119px;width:128px"><span class="rs">R$</span><span>21,06</span></div>
<div class="c money num" style="left:1247px;width:187px"><span class="rs">R$</span><span>42,12</span></div>
<div class="c" style="left:1434px;width:187px"><span class="up">SERRA</span></div>
<div class="c" style="left:1621px;width:91px"><span class="up">ES</span></div>
<div class="c" style="left:1712px;width:90px"><span class="up">PC</span></div>
<div class="c date" style="left:1802px;width:120px">08/02/2024</div>
</div>
<div class="row" style="top:215px">
<div class="c num" style="left:0px;width:105px">7</div>
<div class="c" style="left:105px;width:143px">Jean</div>
<div class="c" style="left:248px;width:171px">Pneumática (SMC)</div>
<div class="c" style="left:419px;width:262px">Mouse</div>
<div class="c" style="left:681px;width:277px"><span class="up">SANS</span></div>
<div class="c num" style="left:958px;width:82px">13021</div>
<div class="c num" style="left:1040px;width:79px">4</div>
<div class="c money num" style="left:1119px;width:128px"><span class="rs">R$</span><span>17,01</span></div>
<div class="c money num" style="left:1247px;width:187px"><span class="rs">R$</span><span>68,04</span></div>
<div class="c" style="left:1434px;width:187px"><span class="up">SERRA</span></div>
<div class="c" style="left:1621px;width:91px"><span class="up">ES</span></div>
<div class="c" style="left:1712px;width:90px"><span class="up">PC</span></div>
<div class="c date" style="left:1802px;width:120px">08/02/2024</div>
</div>
<div class="row" style="top:245px">
<div class="c num" style="left:0px;width:105px">2</div>
<div class="c" style="left:105px;width:143px">Jean</div>
<div class="c" style="left:248px;width:171px">Pneumática (SMC)</div>
<div class="c" style="left:419px;width:262px">Mouse</div>
<div class="c" style="left:681px;width:277px"><span class="up">SANS</span></div>
<div class="c num" style="left:958px;width:82px">13021</div>
<div class="c num" style="left:1040px;width:79px">5</div>
<div class="c money num" style="left:1119px;width:128px"><span class="rs">R$</span><span>14,47</span></div>
<div class="c money num" style="left:1247px;width:187px"><span class="rs">R$</span><span>72,35</span></div>
<div class="c" style="left:1434px;width:187px"><span class="up">SERRA</span></div>
<div class="c" style="left:1621px;width:91px"><span class="up">ES</span></div>
<div class="c" style="left:1712px;width:90px"><span class="up">PC</span></div>
<div class="c date" style="left:1802px;width:120px">08/02/2024</div>
</div>
<div class="row" style="top:275px">
<div class="c num" style="left:0px;width:105px">4</div>
<div class="c" style="left:105px;width:143px">Jean</div>
<div class="c" style="left:248px;width:171px">kits Fluidvix</div>
<div class="c" style="left:419px;width:262px">Mouse</div>
<div class="c" style="left:681px;width:277px"><span class="up">SANS</span></div>
<div class="c num" style="left:958px;width:82px">13021</div>
<div class="c num" style="left:1040px;width:79px">30</div>
<div class="c money num" style="left:1119px;width:128px"><span class="rs">R$</span><span>2,87</span></div>
<div class="c money num" style="left:1247px;width:187px"><span class="rs">R$</span><span>86,10</span></div>
<div class="c" style="left:1434px;width:187px"><span class="up">SERRA</span></div>
<div class="c" style="left:1621px;width:91px"><span class="up">ES</span></div>
<div class="c" style="left:1712px;width:90px"><span class="up">M</span></div>
<div class="c date" style="left:1802px;width:120px">08/02/2024</div>
</div>
<div class="row" style="top:305px">
<div class="c num" style="left:0px;width:105px">1</div>
<div class="c" style="left:105px;width:143px">Jean</div>
<div class="c" style="left:248px;width:171px">Hidráulica (Hydac)</div>
<div class="c" style="left:419px;width:262px">Mouse</div>
<div class="c" style="left:681px;width:277px"><span class="up">SANS</span></div>
<div class="c num" style="left:958px;width:82px">13021</div>
<div class="c num" style="left:1040px;width:79px">2</div>
<div class="c money num" style="left:1119px;width:128px"><span class="rs">R$</span><span>418,52</span></div>
<div class="c money num" style="left:1247px;width:187px"><span class="rs">R$</span><span>837,04</span></div>
<div class="c" style="left:1434px;width:187px"><span class="up">SERRA</span></div>
<div class="c" style="left:1621px;width:91px"><span class="up">ES</span></div>
<div class="c" style="left:1712px;width:90px"><span class="up">PC</span></div>
<div class="c date" style="left:1802px;width:120px">08/02/2024</div>
</div>
<div class="row" style="top:335px">
<div class="c num" style="left:0px;width:105px">1</div>
<div class="c" style="left:105px;width:143px">Arthur</div>
<div class="c" style="left:248px;width:171px">Pneumática (SMC)</div>
<div class="c" style="left:419px;width:262px">Mouse</div>
<div class="c" style="left:681px;width:277px"><span class="up">SANS</span></div>
<div class="c num" style="left:958px;width:82px">13022</div>
<div class="c num" style="left:1040px;width:79px">100</div>
<div class="c money num" style="left:1119px;width:128px"><span class="rs">R$</span><span>3,18</span></div>
<div class="c money num" style="left:1247px;width:187px"><span class="rs">R$</span><span>318,01</span></div>
<div class="c" style="left:1434px;width:187px"><span class="up">SERRA</span></div>
<div class="c" style="left:1621px;width:91px"><span class="up">ES</span></div>
<div class="c" style="left:1712px;width:90px"><span class="up">M</span></div>
<div class="c date" style="left:1802px;width:120px">08/02/2024</div>
</div>
<div class="row" style="top:365px">
<div class="c num" style="left:0px;width:105px">1</div>
<div class="c" style="left:105px;width:143px">Jean</div>
<div class="c" style="left:248px;width:171px">Hidráulica (Hydac)</div>
<div class="c" style="left:419px;width:262px">Mouse</div>
<div class="c" style="left:681px;width:277px"><span class="up">SANS</span></div>
<div class="c num" style="left:958px;width:82px">13023</div>
<div class="c num" style="left:1040px;width:79px">15</div>
<div class="c money num" style="left:1119px;width:128px"><span class="rs">R$</span><span>7,49</span></div>
<div class="c money num" style="left:1247px;width:187px"><span class="rs">R$</span><span>112,35</span></div>
<div class="c" style="left:1434px;width:187px"><span class="up">SERRA</span></div>
<div class="c" style="left:1621px;width:91px"><span class="up">ES</span></div>
<div class="c" style="left:1712px;width:90px"><span class="up">PC</span></div>
<div class="c date" style="left:1802px;width:120px">08/02/2024</div>
</div>
<div class="row" style="top:395px">
<div class="c num" style="left:0px;width:105px">1</div>
<div class="c" style="left:105px;width:143px">Jamili</div>
<div class="c" style="left:248px;width:171px">Pneumática (SMC)</div>
<div class="c" style="left:419px;width:262px">Mouse</div>
<div class="c" style="left:681px;width:277px"><span class="up">SANS</span></div>
<div class="c num" style="left:958px;width:82px">13024</div>
<div class="c num" style="left:1040px;width:79px">4</div>
<div class="c money num" style="left:1119px;width:128px"><span class="rs">R$</span><span>136,28</span></div>
<div class="c money num" style="left:1247px;width:187px"><span class="rs">R$</span><span>545,12</span></div>
<div class="c" style="left:1434px;width:187px"><span class="up">VIANA</span></div>
<div class="c" style="left:1621px;width:91px"><span class="up">ES</span></div>
<div class="c" style="left:1712px;width:90px"><span class="up">PC</span></div>
<div class="c date" style="left:1802px;width:120px">08/02/2024</div>
</div>
<div class="row" style="top:425px">
<div class="c num" style="left:0px;width:105px">1</div>
<div class="c" style="left:105px;width:143px">Eduardo</div>
<div class="c" style="left:248px;width:171px">Pneumática (SMC)</div>
<div class="c" style="left:419px;width:262px">Mouse</div>
<div class="c" style="left:681px;width:277px"><span class="up">SANS</span></div>
<div class="c num" style="left:958px;width:82px">13025</div>
<div class="c num" style="left:1040px;width:79px">2</div>
<div class="c money num" style="left:1119px;width:128px"><span class="rs">R$</span><span>615,62</span></div>
<div class="c money num" style="left:1247px;width:187px"><span class="rs">R$</span><span>1.231,24</span></div>
<div class="c" style="left:1434px;width:187px"><span class="up">SERRA</span></div>
<div class="c" style="left:1621px;width:91px"><span class="up">ES</span></div>
<div class="c" style="left:1712px;width:90px"><span class="up">PC</span></div>
<div class="c date" style="left:1802px;width:120px">08/02/2024</div>
</div>
<div class="row" style="top:455px">
<div class="c num" style="left:0px;width:105px">1</div>
<div class="c" style="left:105px;width:143px">Eduardo</div>
<div class="c" style="left:248px;width:171px">Eletrônica ( OMRON )</div>
<div class="c" style="left:419px;width:262px">Mouse</div>
<div class="c" style="left:681px;width:277px"><span class="up">SANS</span></div>
<div class="c num" style="left:958px;width:82px">13026</div>
<div class="c num" style="left:1040px;width:79px">1</div>
<div class="c money num" style="left:1119px;width:128px"><span class="rs">R$</span><span>615,62</span></div>
<div class="c money num" style="left:1247px;width:187px"><span class="rs">R$</span><span>615,62</span></div>
<div class="c" style="left:1434px;width:187px"><span class="up">LINHARES</span></div>
<div class="c" style="left:1621px;width:91px"><span class="up">ES</span></div>
<div class="c" style="left:1712px;width:90px"><span class="up">PC</span></div>
<div class="c date" style="left:1802px;width:120px">08/02/2024</div>
</div>
<div class="row" style="top:485px">
<div class="c num" style="left:0px;width:105px">1</div>
<div class="c" style="left:105px;width:143px">Eduardo</div>
<div class="c" style="left:248px;width:171px">kits Fluidvix</div>
<div class="c" style="left:419px;width:262px">Mouse</div>
<div class="c" style="left:681px;width:277px"><span class="up">SANS</span></div>
<div class="c num" style="left:958px;width:82px">13027</div>
<div class="c num" style="left:1040px;width:79px">1</div>
<div class="c money num" style="left:1119px;width:128px"><span class="rs">R$</span><span>615,62</span></div>
<div class="c money num" style="left:1247px;width:187px"><span class="rs">R$</span><span>615,62</span></div>
<div class="c" style="left:1434px;width:187px"><span class="up">LINHARES</span></div>
<div class="c" style="left:1621px;width:91px"><span class="up">ES</span></div>
<div class="c" style="left:1712px;width:90px"><span class="up">PC</span></div>
<div class="c date" style="left:1802px;width:120px">08/02/2024</div>
</div>
<div class="row" style="top:515px">
<div class="c num" style="left:0px;width:105px">2</div>
<div class="c" style="left:105px;width:143px">Arthur</div>
<div class="c" style="left:248px;width:171px">Hidráulica (Hydac)</div>
<div class="c" style="left:419px;width:262px">Mouse</div>
<div class="c" style="left:681px;width:277px"><span class="up">SANS</span></div>
<div class="c num" style="left:958px;width:82px">13029</div>
<div class="c num" style="left:1040px;width:79px">10</div>
<div class="c money num" style="left:1119px;width:128px"><span class="rs">R$</span><span>11,80</span></div>
<div class="c money num" style="left:1247px;width:187px"><span class="rs">R$</span><span>118,00</span></div>
<div class="c" style="left:1434px;width:187px"><span class="up">LINHARES</span></div>
<div class="c" style="left:1621px;width:91px"><span class="up">ES</span></div>
<div class="c" style="left:1712px;width:90px"><span class="up">PC</span></div>
<div class="c date" style="left:1802px;width:120px">08/02/2024</div>
</div>
<div class="row" style="top:545px">
<div class="c num" style="left:0px;width:105px">1</div>
<div class="c" style="left:105px;width:143px">Arthur</div>
<div class="c" style="left:248px;width:171px">Pneumática (SMC)</div>
<div class="c" style="left:419px;width:262px">Teclado</div>
<div class="c" style="left:681px;width:277px"><span class="up">SANS</span></div>
<div class="c num" style="left:958px;width:82px">13029</div>
<div class="c num" style="left:1040px;width:79px">10</div>
<div class="c money num" style="left:1119px;width:128px"><span class="rs">R$</span><span>11,80</span></div>
<div class="c money num" style="left:1247px;width:187px"><span class="rs">R$</span><span>118,00</span></div>
<div class="c" style="left:1434px;width:187px"><span class="up">ARACRUZ</span></div>
<div class="c" style="left:1621px;width:91px"><span class="up">ES</span></div>
<div class="c" style="left:1712px;width:90px"><span class="up">PC</span></div>
<div class="c date" style="left:1802px;width:120px">08/02/2024</div>
</div>
<div class="row" style="top:575px">
<div class="c num" style="left:0px;width:105px">3</div>
<div class="c" style="left:105px;width:143px">Arthur</div>
<div class="c" style="left:248px;width:171px">Hidráulica (Hydac)</div>
<div class="c" style="left:419px;width:262px">Teclado</div>
<div class="c" style="left:681px;width:277px"><span class="up">SANS</span></div>
<div class="c num" style="left:958px;width:82px">13029</div>
<div class="c num" style="left:1040px;width:79px">10</div>
<div class="c money num" style="left:1119px;width:128px"><span class="rs">R$</span><span>16,80</span></div>
<div class="c money num" style="left:1247px;width:187px"><span class="rs">R$</span><span>168,00</span></div>
<div class="c" style="left:1434px;width:187px"><span class="up">ARACRUZ</span></div>
<div class="c" style="left:1621px;width:91px"><span class="up">ES</span></div>
<div class="c" style="left:1712px;width:90px"><span class="up">PC</span></div>
<div class="c date" style="left:1802px;width:120px">08/02/2024</div>
</div>
<div class="row" style="top:605px">
<div class="c num" style="left:0px;width:105px">8</div>
<div class="c" style="left:105px;width:143px">Eduardo</div>
<div class="c" style="left:248px;width:171px">Pneumática (SMC)</div>
<div class="c" style="left:419px;width:262px">Teclado</div>
<div class="c" style="left:681px;width:277px"><span class="up">SANS</span></div>
<div class="c num" style="left:958px;width:82px">13031</div>
<div class="c num" style="left:1040px;width:79px">10</div>
<div class="c money num" style="left:1119px;width:128px"><span class="rs">R$</span><span>8,60</span></div>
<div class="c money num" style="left:1247px;width:187px"><span class="rs">R$</span><span>86,00</span></div>
<div class="c" style="left:1434px;width:187px"><span class="up">ARACRUZ</span></div>
<div class="c" style="left:1621px;width:91px"><span class="up">ES</span></div>
<div class="c" style="left:1712px;width:90px"><span class="up">PC</span></div>
<div class="c date" style="left:1802px;width:120px">08/02/2024</div>
</div>
<div class="row" style="top:635px">
<div class="c num" style="left:0px;width:105px">3</div>
<div class="c" style="left:105px;width:143px">Eduardo</div>
<div class="c" style="left:248px;width:171px">Hidráulica (Hydac)</div>
<div class="c" style="left:419px;width:262px">Teclado</div>
<div class="c" style="left:681px;width:277px"><span class="up">SANS</span></div>
<div class="c num" style="left:958px;width:82px">13031</div>
<div class="c num" style="left:1040px;width:79px">10</div>
<div class="c money num" style="left:1119px;width:128px"><span class="rs">R$</span><span>6,04</span></div>
<div class="c money num" style="left:1247px;width:187px"><span class="rs">R$</span><span>60,40</span></div>
<div class="c" style="left:1434px;width:187px"><span class="up">LINHARES</span></div>
<div class="c" style="left:1621px;width:91px"><span class="up">ES</span></div>
<div class="c" style="left:1712px;width:90px"><span class="up">PC</span></div>
<div class="c date" style="left:1802px;width:120px">08/02/2024</div>
</div>
<div class="selbox"></div>
</div>
</div>
</body>
</html>
